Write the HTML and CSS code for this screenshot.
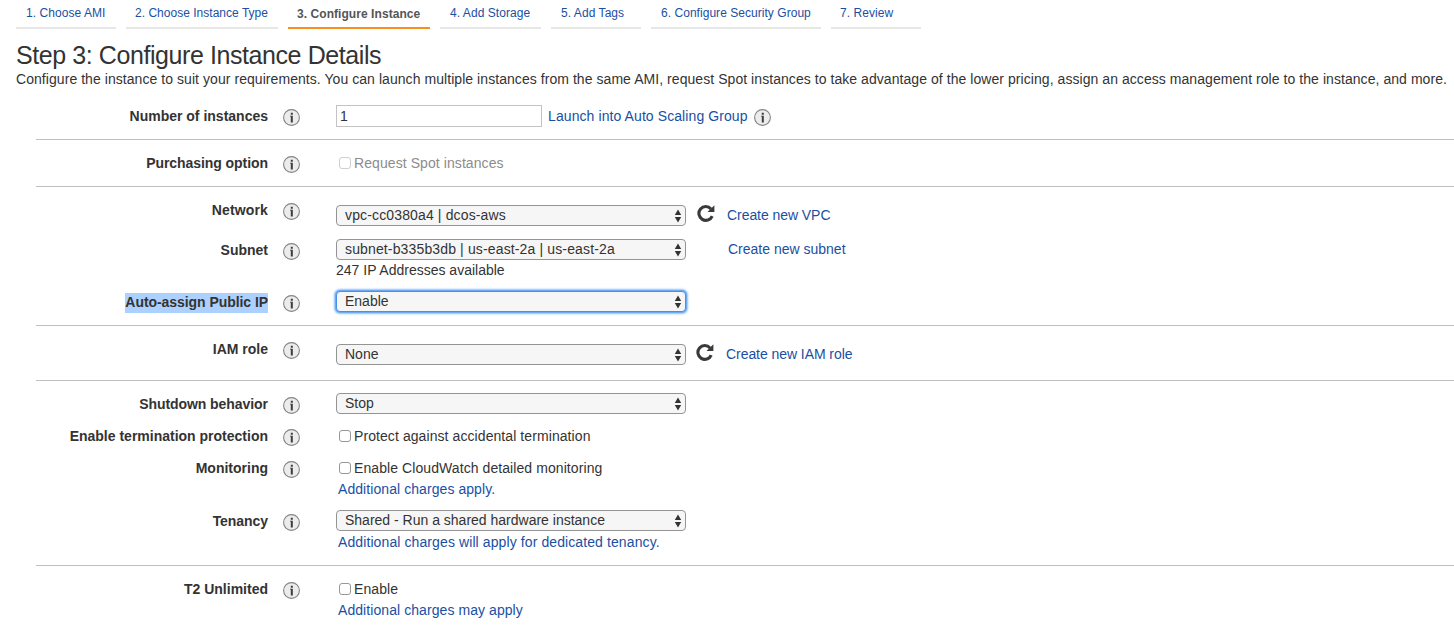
FILE: index.html
```html
<!DOCTYPE html>
<html lang="en">
<head>
<meta charset="utf-8">
<title>Configure Instance Details</title>
<link rel="stylesheet" href="styles.css">
</head>
<body>
<svg class="defs" aria-hidden="true">
  <symbol id="info" viewBox="0 0 17 17">
    <circle cx="8.5" cy="8.5" r="7.9" fill="#ececec" stroke="#858585" stroke-width="1.1"/>
    <path d="M7.8 3.8h2v1.9h-2zM7 6.7h2.8v6.8h-2V7.6H7z" fill="#3c3c3c"/>
  </symbol>
  <symbol id="refresh" viewBox="0 0 18 18">
    <path d="M14 4.9A6.9 6.9 0 1 0 15.2 12.1" fill="none" stroke="#3a3a3a" stroke-width="3.1"/>
    <path d="M17.4 1.2v6.9h-6.9z" fill="#3a3a3a"/>
  </symbol>
  <symbol id="arrows" viewBox="0 0 8 14">
    <path d="M4 .5L7.2 6H.8zM4 13.5L.8 8h6.4z" fill="#333"/>
  </symbol>
</svg>

<nav class="steps">
  <a class="step step-ami"><span>1. Choose AMI</span></a>
  <a class="step step-type"><span>2. Choose Instance Type</span></a>
  <a class="step step-configure active"><span>3. Configure Instance</span></a>
  <a class="step step-storage"><span>4. Add Storage</span></a>
  <a class="step step-tags"><span>5. Add Tags</span></a>
  <a class="step step-security"><span>6. Configure Security Group</span></a>
  <a class="step step-review"><span>7. Review</span></a>
</nav>

<header class="intro">
  <h1>Step 3: Configure Instance Details</h1>
  <p>Configure the instance to suit your requirements. You can launch multiple instances from the same AMI, request Spot instances to take advantage of the lower pricing, assign an access management role to the instance, and more.</p>
</header>

<main>
  <section class="first">
    <div class="row raised h34">
      <div class="label">Number of instances</div><svg class="info"><use href="#info"/></svg>
      <div class="field"><div class="line"><input class="count" type="text" value="1"><a class="after-count">Launch into Auto Scaling Group</a><svg class="info info-inline"><use href="#info"/></svg></div></div>
    </div>
  </section>

  <section>
    <div class="row h32">
      <div class="label snug">Purchasing option</div><svg class="info"><use href="#info"/></svg>
      <div class="field"><label class="check disabled"><input type="checkbox" disabled>Request Spot instances</label></div>
    </div>
  </section>

  <section>
    <div class="row lowered h38">
      <div class="label loose">Network</div><svg class="info"><use href="#info"/></svg>
      <div class="field"><div class="line">
        <div class="select wide"><select><option>vpc-cc0380a4 | dcos-aws</option></select><svg><use href="#arrows"/></svg></div>
        <svg class="refresh"><use href="#refresh"/></svg><a class="create">Create new VPC</a>
      </div></div>
    </div>
    <div class="row raised h52">
      <div class="label">Subnet</div><svg class="info"><use href="#info"/></svg>
      <div class="field"><div class="line">
        <div class="select wide"><select><option>subnet-b335b3db | us-east-2a | us-east-2a</option></select><svg><use href="#arrows"/></svg></div>
        <a class="create-subnet">Create new subnet</a>
      </div><div class="note">247 IP Addresses available</div></div>
    </div>
    <div class="row raised h34">
      <div class="label snug"><span class="selected">Auto-assign Public IP</span></div><svg class="info"><use href="#info"/></svg>
      <div class="field"><div class="select focused"><select><option>Enable</option></select><svg><use href="#arrows"/></svg></div></div>
    </div>
  </section>

  <section>
    <div class="row lowered h40">
      <div class="label">IAM role</div><svg class="info"><use href="#info"/></svg>
      <div class="field"><div class="line">
        <div class="select"><select><option>None</option></select><svg><use href="#arrows"/></svg></div>
        <svg class="refresh refresh-iam"><use href="#refresh"/></svg><a class="create">Create new IAM role</a>
      </div></div>
    </div>
  </section>

  <section class="tight">
    <div class="row raised h34">
      <div class="label snug">Shutdown behavior</div><svg class="info"><use href="#info"/></svg>
      <div class="field"><div class="select"><select><option>Stop</option></select><svg><use href="#arrows"/></svg></div></div>
    </div>
    <div class="row h32">
      <div class="label">Enable termination protection</div><svg class="info"><use href="#info"/></svg>
      <div class="field"><label class="check"><input type="checkbox">Protect against accidental termination</label></div>
    </div>
    <div class="row h51">
      <div class="label">Monitoring</div><svg class="info"><use href="#info"/></svg>
      <div class="field"><label class="check"><input type="checkbox">Enable CloudWatch detailed monitoring</label><a class="charges">Additional charges apply.</a></div>
    </div>
    <div class="row raised h55">
      <div class="label snug">Tenancy</div><svg class="info"><use href="#info"/></svg>
      <div class="field"><div class="select"><select><option>Shared - Run a shared hardware instance</option></select><svg><use href="#arrows"/></svg></div><a class="charges tenancy">Additional charges will apply for dedicated tenancy.</a></div>
    </div>
  </section>

  <section class="last">
    <div class="row h45">
      <div class="label">T2 Unlimited</div><svg class="info"><use href="#info"/></svg>
      <div class="field"><label class="check"><input type="checkbox">Enable</label><a class="charges">Additional charges may apply</a></div>
    </div>
  </section>
</main>
</body>
</html>
```

FILE: styles.css
```css
* { box-sizing: border-box; }
body {
  margin: 0;
  width: 1454px;
  height: 625px;
  overflow: hidden;
  background: #fff;
  color: #333;
  font: 14px/20px "Liberation Sans", Arial, sans-serif;
  white-space: nowrap;
}
.defs { display: none; }
a { color: #1a4fa3; }

.steps { display: flex; gap: 10px; padding-left: 16px; height: 29px; }
.step { padding: 3px 0 0 10px; border-bottom: 2px solid #e7e7e7; font-size: 12px; letter-spacing: .06px; }
.step.active { padding: 4px 0 0 9px; border-color: #f7901e; color: #555; font-weight: bold; }
.step-ami { width: 100px; }
.step-type { width: 152px; padding-left: 9px; letter-spacing: .02px; }
.step-configure { width: 142px; }
.step-storage { width: 101px; }
.step-tags { width: 90px; }
.step-security { width: 170px; letter-spacing: .04px; }
.step-review { width: 90px; padding-left: 9px; }

.intro { padding: 12px 0 0 16px; }
h1 { margin: 0; font-size: 25px; line-height: 28px; font-weight: normal; letter-spacing: -.42px; }
.intro p { margin: 0; letter-spacing: .058px; }

section { margin-left: 36px; padding-top: 14px; border-bottom: 1px solid #bfbfbf; }
section.first { padding-top: 16px; }
section.tight { padding-top: 12px; }
section.last { border-bottom: 0; }

.row { display: grid; grid-template-columns: 232px 17px 1fr; column-gap: 15px; align-items: start; }
.label { margin-top: -1px; text-align: right; font-weight: bold; }
.snug { letter-spacing: -.06px; }
.loose { letter-spacing: .15px; }
.info { display: block; width: 17px; height: 17px; margin-top: 2px; }
.field { padding-left: 21px; }
.raised .label { padding-top: 2px; }
.raised > .info { margin-top: 4px; }
.lowered .field { padding-top: 4px; }
.h32 { height: 32px; }
.h34 { height: 34px; }
.h38 { height: 38px; }
.h40 { height: 40px; }
.h45 { height: 45px; }
.h51 { height: 51px; }
.h52 { height: 52px; }
.h55 { height: 55px; }
.selected { display: inline-block; margin-top: 1px; padding-bottom: 2px; line-height: 18px; background: #acd1ff; }

.line { display: flex; align-items: flex-start; }
.count {
  width: 206px;
  height: 22px;
  padding: 0 3px;
  border: 1px solid #c3c3c3;
  color: #333;
  font: inherit;
}
.after-count { margin: 1px 0 0 6px; letter-spacing: .09px; }
.info-inline { margin: 4px 0 0 6px; }

.select { position: relative; width: 350px; height: 21px; }
.select select {
  display: block;
  width: 350px;
  height: 21px;
  padding: 0 8px;
  appearance: none;
  border: 1px solid #949494;
  border-radius: 4px;
  background: #f6f6f6;
  color: #333;
  font: inherit;
  line-height: 19px;
}
.select.wide select { letter-spacing: .14px; }
.select svg { position: absolute; right: 4px; top: 4px; width: 8px; height: 14px; }
.select.focused select { border-color: #4a8fe6; outline: none; box-shadow: 0 0 0 1px #6eabf7, 0 0 2px 2px #8fc0fb; }

.refresh { width: 18px; height: 18px; margin: -1px 0 0 11px; }
.refresh-iam { margin-left: 10px; }
.create { margin-left: 12px; letter-spacing: -.06px; }
.create-subnet { margin-left: 42px; }

.check { display: flex; height: 20px; line-height: 18px; letter-spacing: .08px; }
.check input {
  width: 12px;
  height: 12px;
  margin: 3px 3px 0;
  appearance: none;
  border: 1px solid #989898;
  border-radius: 3px;
  background: #fff;
}
.disabled { color: #8c8c8c; }
.disabled input { border-color: #cfcfcf; }
.charges { display: block; margin-left: 2px; letter-spacing: .07px; }
.tenancy { margin-top: 1px; letter-spacing: .1px; }
```
